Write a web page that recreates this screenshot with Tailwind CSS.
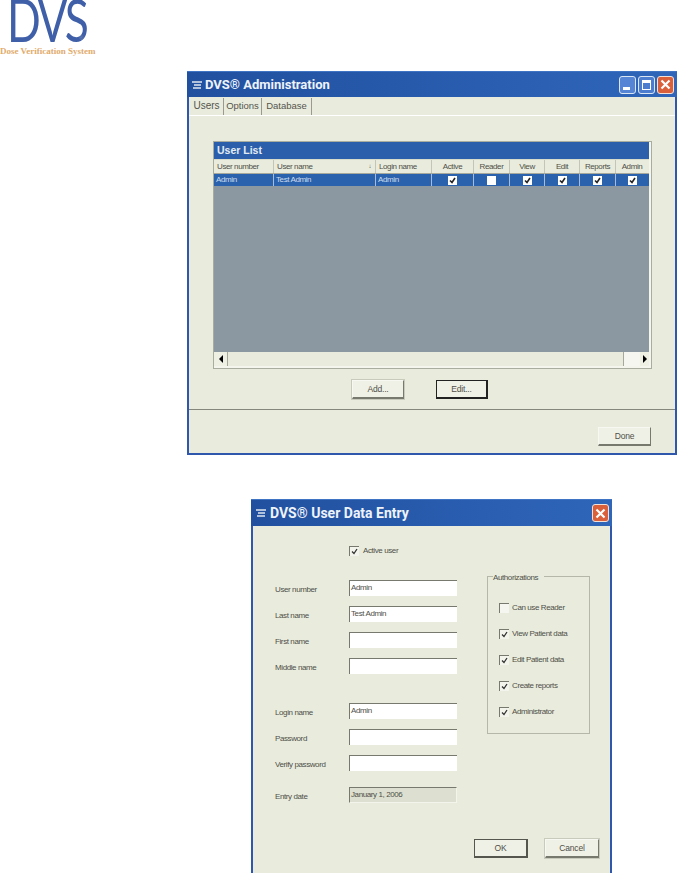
<!DOCTYPE html>
<html lang="en">
<head>
    <meta charset="UTF-8">
    <title>DVS Administration</title>
    <script src="https://cdn.jsdelivr.net/npm/@tailwindcss/browser@4"></script>
</head>
<body class="bg-white font-['Liberation_Sans',Arial,sans-serif] text-[#4f4f48]">
<div class="w-[678px] h-[873px] overflow-hidden">

    <!-- logo -->
    <div class="h-[71px] w-[110px] overflow-hidden">
        <div class="h-[45px] pl-[7px] relative">
            <span class="block font-['Lato',sans-serif] text-[#3f5fa8] text-[60px] leading-[44px] tracking-[-3px] origin-top-left scale-x-[0.74] -translate-y-[3px]">DVS</span>
            <span class="absolute left-[79px] top-[34px] text-[6px] text-[#7f8fb8]">®</span>
        </div>
        <div class="font-['Liberation_Serif',serif] font-bold text-[#e2ab6c] text-[9px] leading-[10px] whitespace-nowrap mt-[1px]">Dose Verification System</div>
    </div>

    <!-- admin window -->
    <div class="ml-[187px] w-[490px] h-[384px] flex flex-col bg-[#e9ecdd] border-x-[2px] border-b-[2px] border-[#2f57ac]">
        <div class="h-[26px] -mx-[2px] flex items-center bg-gradient-to-r from-[#21509f] to-[#2f66ba] border-t border-[#3f73c4] pl-[4px] pr-[3px]">
            <svg class="w-[12px] h-[10px] mr-[2px]" viewBox="0 0 12 10"><path d="M1 2h10M3 5h7M2 8h8" stroke="#dfe6f0" stroke-width="1.4" fill="none"/></svg>
            <span class="font-['Roboto',sans-serif] font-bold text-[#eef3fa] text-[13px]">DVS® Administration</span>
            <div class="ml-auto flex gap-[2px]">
                <div class="w-[17px] h-[18px] rounded-[3px] bg-[#5585d4] border border-[#dbe6f5] flex items-end pl-[3px] pb-[3px]"><div class="w-[7px] h-[3px] bg-white"></div></div>
                <div class="w-[17px] h-[18px] rounded-[3px] bg-[#4c7dcf] border border-[#dbe6f5] p-[3px]"><div class="w-full h-full border border-white border-t-[3px]"></div></div>
                <div class="w-[17px] h-[18px] rounded-[3px] bg-[#d9603a] border border-[#f0e0d8] flex items-center justify-center">
                    <svg class="w-[11px] h-[11px]" viewBox="0 0 11 11"><path d="M1.5 1.5l8 8M9.5 1.5l-8 8" stroke="#fff" stroke-width="2.2"/></svg>
                </div>
            </div>
        </div>

        <!-- tabs -->
        <div class="h-[19px] flex items-end pl-[1px] border-b border-white text-[9.5px] text-[#55554e]">
            <div class="h-[19px] w-[33px] flex items-center justify-center text-[10px]">Users</div>
            <div class="h-[17px] w-[39px] flex items-center justify-center border-l border-r border-[#9a9a90]">Options</div>
            <div class="h-[17px] w-[50px] flex items-center justify-center border-r border-[#9a9a90]">Database</div>
        </div>

        <!-- user list -->
        <div class="ml-[25px] mt-[26px] w-[437px] h-[226px] flex flex-col border-r-[2px] border-b-[2px] border-[#f4f6ee] outline outline-1 outline-[#a9ad9f] tracking-[-0.4px]">
            <div class="h-[18px] bg-[#2b5fab] text-[#e3ebf2] text-[10.5px] font-bold flex items-center pl-[3px] border-b border-[#d8dccb] tracking-normal">User List</div>
            <div class="grid grid-cols-[60px_102px_56px_42px_36px_35px_35px_36px_32px] h-[14px] text-[8px] items-center border-b border-[#a5a89a]">
                <div class="pl-[3px] border-r border-[#c3c6b6] h-full leading-[13px]">User number</div>
                <div class="pl-[3px] border-r border-[#c3c6b6] h-full leading-[13px] flex justify-between pr-[4px]"><span>User name</span><span class="text-[6px]">↓</span></div>
                <div class="pl-[3px] border-r border-[#c3c6b6] h-full leading-[13px]">Login name</div>
                <div class="text-center border-r border-[#c3c6b6] h-full leading-[13px]">Active</div>
                <div class="text-center border-r border-[#c3c6b6] h-full leading-[13px]">Reader</div>
                <div class="text-center border-r border-[#c3c6b6] h-full leading-[13px]">View</div>
                <div class="text-center border-r border-[#c3c6b6] h-full leading-[13px]">Edit</div>
                <div class="text-center border-r border-[#c3c6b6] h-full leading-[13px]">Reports</div>
                <div class="text-center h-full leading-[13px]">Admin</div>
            </div>
            <div class="grid grid-cols-[60px_102px_56px_42px_36px_35px_35px_36px_32px] h-[12px] bg-[#2a62ad] text-[#cfdcec] text-[8px] items-center">
                <div class="pl-[2px] border-r border-[#a9bcd6] h-full leading-[11px]">Admin</div>
                <div class="pl-[2px] border-r border-[#a9bcd6] h-full leading-[11px]">Test Admin</div>
                <div class="pl-[2px] border-r border-[#a9bcd6] h-full leading-[11px]">Admin</div>
                <div class="border-r border-[#a9bcd6] h-full flex items-center justify-center"><div class="w-[9px] h-[9px] bg-white flex items-center justify-center"><svg class="w-[7px] h-[7px]" viewBox="0 0 7 7"><path d="M1 3.5l2 2 3-4.5" stroke="#222" stroke-width="1.6" fill="none"/></svg></div></div>
                <div class="border-r border-[#a9bcd6] h-full flex items-center justify-center"><div class="w-[9px] h-[9px] bg-white"></div></div>
                <div class="border-r border-[#a9bcd6] h-full flex items-center justify-center"><div class="w-[9px] h-[9px] bg-white flex items-center justify-center"><svg class="w-[7px] h-[7px]" viewBox="0 0 7 7"><path d="M1 3.5l2 2 3-4.5" stroke="#222" stroke-width="1.6" fill="none"/></svg></div></div>
                <div class="border-r border-[#a9bcd6] h-full flex items-center justify-center"><div class="w-[9px] h-[9px] bg-white flex items-center justify-center"><svg class="w-[7px] h-[7px]" viewBox="0 0 7 7"><path d="M1 3.5l2 2 3-4.5" stroke="#222" stroke-width="1.6" fill="none"/></svg></div></div>
                <div class="border-r border-[#a9bcd6] h-full flex items-center justify-center"><div class="w-[9px] h-[9px] bg-white flex items-center justify-center"><svg class="w-[7px] h-[7px]" viewBox="0 0 7 7"><path d="M1 3.5l2 2 3-4.5" stroke="#222" stroke-width="1.6" fill="none"/></svg></div></div>
                <div class="h-full flex items-center justify-center"><div class="w-[9px] h-[9px] bg-white flex items-center justify-center"><svg class="w-[7px] h-[7px]" viewBox="0 0 7 7"><path d="M1 3.5l2 2 3-4.5" stroke="#222" stroke-width="1.6" fill="none"/></svg></div></div>
            </div>
            <div class="flex-1 bg-[#8b98a1]"></div>
            <div class="h-[14px] flex items-stretch">
                <div class="w-[14px] border-r border-[#a5a89a] flex items-center justify-center bg-[#eef0e4]"><div class="w-0 h-0 border-y-[4px] border-y-transparent border-r-[4px] border-r-black"></div></div>
                <div class="flex-1 border-r border-[#a5a89a]"></div>
                <div class="w-[16px] bg-[#f5f6ef]"></div>
                <div class="w-[9px] flex items-center justify-center bg-[#eef0e4]"><div class="w-0 h-0 border-y-[4px] border-y-transparent border-l-[4px] border-l-black"></div></div>
            </div>
        </div>

        <!-- add / edit -->
        <div class="mt-[12px] ml-[163px] flex gap-[32px] text-[8.5px] tracking-[-0.2px]">
            <button class="w-[52px] h-[19px] bg-[#eff1e6] border border-[#f7f8f2] border-r-[#77796e] border-b-[2px] border-b-[#77796e] outline outline-1 outline-[#c8cabb]">Add...</button>
            <button class="w-[52px] h-[19px] bg-[#eff1e6] border border-[#222] border-b-[2px] border-r-[2px]">Edit...</button>
        </div>

        <div class="mt-[10px] border-t border-[#85877c] border-b-0"></div>
        <div class="mt-[12px] ml-[409px]">
            <button class="w-[53px] h-[19px] bg-[#eff1e6] border border-[#f7f8f2] border-r-[#77796e] border-b-[2px] border-b-[#77796e] text-[8.5px] tracking-[-0.2px]">Done</button>
        </div>
    </div>

    <!-- user data entry window -->
    <div class="mt-[44px] ml-[251px] w-[361px] h-[374px] flex flex-col bg-[#e9ecdd] border-x-[2px] border-[#2f57ac]">
        <div class="h-[27px] -mx-[2px] flex items-center bg-gradient-to-r from-[#21509f] to-[#2f66ba] border-t border-[#3f73c4] pl-[4px] pr-[3px]">
            <svg class="w-[12px] h-[10px] mr-[3px]" viewBox="0 0 12 10"><path d="M1 2h10M3 5h7M2 8h8" stroke="#dfe6f0" stroke-width="1.4" fill="none"/></svg>
            <span class="font-['Roboto',sans-serif] font-bold text-[#eef3fa] text-[14px]">DVS® User Data Entry</span>
            <div class="ml-auto w-[17px] h-[18px] rounded-[3px] bg-[#d9603a] border border-[#f0e0d8] flex items-center justify-center">
                <svg class="w-[11px] h-[11px]" viewBox="0 0 11 11"><path d="M1.5 1.5l8 8M9.5 1.5l-8 8" stroke="#fff" stroke-width="2.2"/></svg>
            </div>
        </div>

        <div class="flex-1 flex flex-col text-[8px] tracking-[-0.4px]">
            <div class="mt-[19px] ml-[96px] h-[11px] flex items-center gap-[4px]">
                <div class="w-[10px] h-[10px] bg-[#f3f4ec] border-t border-l border-[#77796e] flex items-center justify-center"><svg class="w-[7px] h-[7px]" viewBox="0 0 7 7"><path d="M1 3.5l2 2 3-4.5" stroke="#333" stroke-width="1.3" fill="none"/></svg></div>
                <span>Active user</span>
            </div>

            <div class="flex mt-[20px]">
                <!-- fields -->
                <div class="ml-[22px] w-[212px] flex flex-col pt-[4px]">
                    <div class="flex items-center h-[16px]"><span class="w-[74px] pt-[4px]">User number</span><div class="w-[108px] h-[16px] bg-white border-t border-l border-[#77796e] leading-[14px] pl-[1px]">Admin</div></div>
                    <div class="flex items-center h-[16px] mt-[10px]"><span class="w-[74px] pt-[4px]">Last name</span><div class="w-[108px] h-[16px] bg-white border-t border-l border-[#77796e] leading-[14px] pl-[1px]">Test Admin</div></div>
                    <div class="flex items-center h-[16px] mt-[10px]"><span class="w-[74px] pt-[4px]">First name</span><div class="w-[108px] h-[16px] bg-white border-t border-l border-[#77796e]"></div></div>
                    <div class="flex items-center h-[16px] mt-[10px]"><span class="w-[74px] pt-[4px]">Middle name</span><div class="w-[108px] h-[16px] bg-white border-t border-l border-[#77796e]"></div></div>
                    <div class="flex items-center h-[16px] mt-[29px]"><span class="w-[74px] pt-[4px]">Login name</span><div class="w-[108px] h-[16px] bg-white border-t border-l border-[#77796e] leading-[14px] pl-[1px]">Admin</div></div>
                    <div class="flex items-center h-[16px] mt-[10px]"><span class="w-[74px] pt-[4px]">Password</span><div class="w-[108px] h-[16px] bg-white border-t border-l border-[#77796e]"></div></div>
                    <div class="flex items-center h-[16px] mt-[10px]"><span class="w-[74px] pt-[4px]">Verify password</span><div class="w-[108px] h-[16px] bg-white border-t border-l border-[#77796e]"></div></div>
                    <div class="flex items-center h-[16px] mt-[16px]"><span class="w-[74px] pt-[4px]">Entry date</span><div class="w-[108px] h-[16px] bg-[#dde0d0] border-t border-l border-[#77796e] border-r border-b border-r-[#f3f4ec] border-b-[#f3f4ec] leading-[13px] pl-[1px]">January 1, 2006</div></div>
                </div>

                <!-- authorizations -->
                <div class="relative w-[103px] h-[158px] border border-[#b5b8a8] flex flex-col pl-[11px] pt-[25px] gap-[15px]">
                    <span class="absolute left-[5px] -top-[4px] bg-[#e9ecdd] pr-[6px] leading-[10px]">Authorizations</span>
                    <div class="flex items-center gap-[3px] h-[11px]"><div class="w-[10px] h-[10px] bg-[#f5f6ef] border-t border-l border-[#77796e]"></div><span>Can use Reader</span></div>
                    <div class="flex items-center gap-[3px] h-[11px]"><div class="w-[10px] h-[10px] bg-[#f3f4ec] border-t border-l border-[#77796e] flex items-center justify-center"><svg class="w-[7px] h-[7px]" viewBox="0 0 7 7"><path d="M1 3.5l2 2 3-4.5" stroke="#333" stroke-width="1.3" fill="none"/></svg></div><span>View Patient data</span></div>
                    <div class="flex items-center gap-[3px] h-[11px]"><div class="w-[10px] h-[10px] bg-[#f3f4ec] border-t border-l border-[#77796e] flex items-center justify-center"><svg class="w-[7px] h-[7px]" viewBox="0 0 7 7"><path d="M1 3.5l2 2 3-4.5" stroke="#333" stroke-width="1.3" fill="none"/></svg></div><span>Edit Patient data</span></div>
                    <div class="flex items-center gap-[3px] h-[11px]"><div class="w-[10px] h-[10px] bg-[#f3f4ec] border-t border-l border-[#77796e] flex items-center justify-center"><svg class="w-[7px] h-[7px]" viewBox="0 0 7 7"><path d="M1 3.5l2 2 3-4.5" stroke="#333" stroke-width="1.3" fill="none"/></svg></div><span>Create reports</span></div>
                    <div class="flex items-center gap-[3px] h-[11px]"><div class="w-[10px] h-[10px] bg-[#f3f4ec] border-t border-l border-[#77796e] flex items-center justify-center"><svg class="w-[7px] h-[7px]" viewBox="0 0 7 7"><path d="M1 3.5l2 2 3-4.5" stroke="#333" stroke-width="1.3" fill="none"/></svg></div><span>Administrator</span></div>
                </div>
            </div>

            <div class="mt-[36px] ml-[221px] flex gap-[17px] text-[8.5px] tracking-[-0.2px]">
                <button class="w-[54px] h-[19px] bg-[#eff1e6] border border-[#55574e] border-r-[2px] border-b-[2px]">OK</button>
                <button class="w-[54px] h-[19px] bg-[#eff1e6] border border-[#f7f8f2] border-r-[#77796e] border-b-[2px] border-b-[#77796e] outline outline-1 outline-[#c8cabb]">Cancel</button>
            </div>
        </div>
    </div>
</div>
</body>
</html>
